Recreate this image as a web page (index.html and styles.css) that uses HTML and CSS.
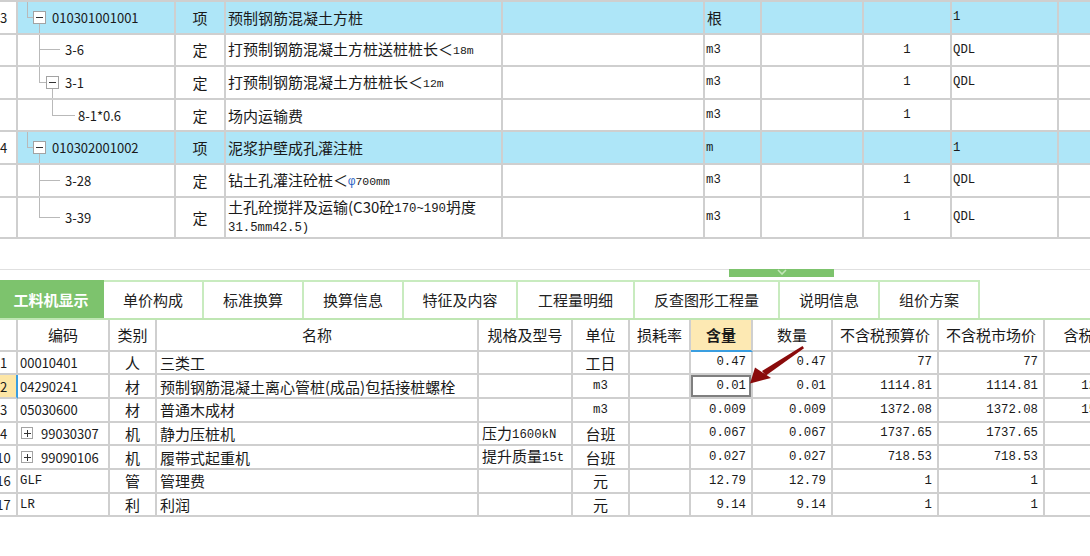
FILE: index.html
```html
<!DOCTYPE html>
<html lang="zh-CN">
<head>
<meta charset="utf-8">
<title>工料机显示</title>
<link rel="stylesheet" href="styles.css">
</head>
<body>
<div class="page">
  <div class="top">
    <div class="trow hl">
      <div class="c num"><span>3</span></div>
      <div class="c code root"><span class="elbow w6"><i></i><i></i></span><span class="bw down"><i class="up"></i><span class="box minus"></span><i class="dn"></i></span><span class="ctext">010301001001</span></div>
      <div class="c ctr">项</div>
      <div class="c l2">预制钢筋混凝土方桩</div>
      <div class="c"></div>
      <div class="c l2">根</div>
      <div class="c"></div>
      <div class="c"></div>
      <div class="c l1"><span class="m">1</span></div>
      <div class="c"></div>
    </div>
    <div class="trow">
      <div class="c num"></div>
      <div class="c code lv1"><span class="elbow w21 cont"><i></i><i></i></span><span class="ctext g5">3-6</span></div>
      <div class="c ctr">定</div>
      <div class="c l2"><span class="t">打预制钢筋混凝土方桩送桩桩长＜<span class="m sm">18m</span></span></div>
      <div class="c"></div>
      <div class="c l1"><span class="m">m3</span></div>
      <div class="c"></div>
      <div class="c ctr"><span class="m">1</span></div>
      <div class="c l1"><span class="m">QDL</span></div>
      <div class="c"></div>
    </div>
    <div class="trow">
      <div class="c num"></div>
      <div class="c code lv1"><span class="elbow w7"><i></i><i></i></span><span class="bw down"><i class="up"></i><span class="box minus"></span><i class="dn"></i></span><span class="ctext">3-1</span></div>
      <div class="c ctr">定</div>
      <div class="c l2"><span class="t">打预制钢筋混凝土方桩桩长＜<span class="m sm">12m</span></span></div>
      <div class="c"></div>
      <div class="c l1"><span class="m">m3</span></div>
      <div class="c"></div>
      <div class="c ctr"><span class="m">1</span></div>
      <div class="c l1"><span class="m">QDL</span></div>
      <div class="c"></div>
    </div>
    <div class="trow">
      <div class="c num"></div>
      <div class="c code lv2"><span class="elbow w23"><i></i><i></i></span><span class="ctext g3">8-1*0.6</span></div>
      <div class="c ctr">定</div>
      <div class="c l2">场内运输费</div>
      <div class="c"></div>
      <div class="c l1"><span class="m">m3</span></div>
      <div class="c"></div>
      <div class="c ctr"><span class="m">1</span></div>
      <div class="c l1"></div>
      <div class="c"></div>
    </div>
    <div class="trow hl">
      <div class="c num"><span>4</span></div>
      <div class="c code root"><span class="elbow w6"><i></i><i></i></span><span class="bw down"><i class="up"></i><span class="box minus"></span><i class="dn"></i></span><span class="ctext">010302001002</span></div>
      <div class="c ctr">项</div>
      <div class="c l2">泥浆护壁成孔灌注桩</div>
      <div class="c"></div>
      <div class="c l1"><span class="m">m</span></div>
      <div class="c"></div>
      <div class="c"></div>
      <div class="c l1"><span class="m">1</span></div>
      <div class="c"></div>
    </div>
    <div class="trow">
      <div class="c num"></div>
      <div class="c code lv1"><span class="elbow w21 cont"><i></i><i></i></span><span class="ctext g5">3-28</span></div>
      <div class="c ctr">定</div>
      <div class="c l2"><span class="t">钻土孔灌注砼桩＜<span class="m phi">φ</span><span class="m sm">700mm</span></span></div>
      <div class="c"></div>
      <div class="c l1"><span class="m">m3</span></div>
      <div class="c"></div>
      <div class="c ctr"><span class="m">1</span></div>
      <div class="c l1"><span class="m">QDL</span></div>
      <div class="c"></div>
    </div>
    <div class="trow tall">
      <div class="c num"></div>
      <div class="c code lv1"><span class="elbow w21"><i></i><i></i></span><span class="ctext g5">3-39</span></div>
      <div class="c ctr">定</div>
      <div class="c l2 two"><div class="t">土孔砼搅拌及运输(C30砼<span class="m">170~190</span>坍度<br><span class="m">31.5mm42.5)</span></div></div>
      <div class="c"></div>
      <div class="c l1"><span class="m">m3</span></div>
      <div class="c"></div>
      <div class="c ctr"><span class="m">1</span></div>
      <div class="c l1"><span class="m">QDL</span></div>
      <div class="c"></div>
    </div>
  </div>

  <div class="split">
    <div class="splitline">
      <div class="handle"><svg width="10" height="6" viewBox="0 0 10 6"><polyline points="1,1 5,5 9,1" fill="none" stroke="#c4e6b9" stroke-width="1.6"/></svg></div>
    </div>
  </div>

  <div class="tabs">
    <div class="tab active t104">工料机显示</div>
    <div class="tab t100">单价构成</div>
    <div class="tab t100">标准换算</div>
    <div class="tab t100">换算信息</div>
    <div class="tab t114">特征及内容</div>
    <div class="tab t117">工程量明细</div>
    <div class="tab t145">反查图形工程量</div>
    <div class="tab t100">说明信息</div>
    <div class="tab t100">组价方案</div>
  </div>

  <div class="bottom">
    <div class="brow bhead">
      <div class="c"></div>
      <div class="c ctr">编码</div>
      <div class="c ctr">类别</div>
      <div class="c ctr">名称</div>
      <div class="c ctr">规格及型号</div>
      <div class="c ctr">单位</div>
      <div class="c ctr">损耗率</div>
      <div class="c ctr sel-col">含量</div>
      <div class="c ctr">数量</div>
      <div class="c ctr">不含税预算价</div>
      <div class="c ctr">不含税市场价</div>
      <div class="c ctr">含税市场价</div>
    </div>
    <div class="brow">
      <div class="c num"><span>1</span></div>
      <div class="c code2">00010401</div>
      <div class="c ctr">人</div>
      <div class="c l3">三类工</div>
      <div class="c"></div>
      <div class="c ctr">工日</div>
      <div class="c"></div>
      <div class="c r"><span class="m">0.47</span></div>
      <div class="c r"><span class="m">0.47</span></div>
      <div class="c r"><span class="m">77</span></div>
      <div class="c r"><span class="m">77</span></div>
      <div class="c r last"><span class="m">77</span></div>
    </div>
    <div class="brow">
      <div class="c num cur"><span>2</span></div>
      <div class="c code2">04290241</div>
      <div class="c ctr">材</div>
      <div class="c l3">预制钢筋混凝土离心管桩(成品)包括接桩螺栓</div>
      <div class="c"></div>
      <div class="c ctr"><span class="m">m3</span></div>
      <div class="c"></div>
      <div class="c r selected"><span class="m">0.01</span></div>
      <div class="c r"><span class="m">0.01</span></div>
      <div class="c r"><span class="m">1114.81</span></div>
      <div class="c r"><span class="m">1114.81</span></div>
      <div class="c r last"><span class="m">1259.74</span></div>
    </div>
    <div class="brow">
      <div class="c num"><span>3</span></div>
      <div class="c code2">05030600</div>
      <div class="c ctr">材</div>
      <div class="c l3">普通木成材</div>
      <div class="c"></div>
      <div class="c ctr"><span class="m">m3</span></div>
      <div class="c"></div>
      <div class="c r"><span class="m">0.009</span></div>
      <div class="c r"><span class="m">0.009</span></div>
      <div class="c r"><span class="m">1372.08</span></div>
      <div class="c r"><span class="m">1372.08</span></div>
      <div class="c r last"><span class="m">1550.45</span></div>
    </div>
    <div class="brow">
      <div class="c num"><span>4</span></div>
      <div class="c code2"><span class="box plus"></span>99030307</div>
      <div class="c ctr">机</div>
      <div class="c l3">静力压桩机</div>
      <div class="c l3"><span class="t">压力<span class="m">1600kN</span></span></div>
      <div class="c ctr">台班</div>
      <div class="c"></div>
      <div class="c r"><span class="m">0.067</span></div>
      <div class="c r"><span class="m">0.067</span></div>
      <div class="c r"><span class="m">1737.65</span></div>
      <div class="c r"><span class="m">1737.65</span></div>
      <div class="c r last"></div>
    </div>
    <div class="brow">
      <div class="c num"><span>10</span></div>
      <div class="c code2"><span class="box plus"></span>99090106</div>
      <div class="c ctr">机</div>
      <div class="c l3">履带式起重机</div>
      <div class="c l3"><span class="t">提升质量<span class="m">15t</span></span></div>
      <div class="c ctr">台班</div>
      <div class="c"></div>
      <div class="c r"><span class="m">0.027</span></div>
      <div class="c r"><span class="m">0.027</span></div>
      <div class="c r"><span class="m">718.53</span></div>
      <div class="c r"><span class="m">718.53</span></div>
      <div class="c r last"></div>
    </div>
    <div class="brow">
      <div class="c num"><span>16</span></div>
      <div class="c code2"><span class="m">GLF</span></div>
      <div class="c ctr">管</div>
      <div class="c l3">管理费</div>
      <div class="c"></div>
      <div class="c ctr">元</div>
      <div class="c"></div>
      <div class="c r"><span class="m">12.79</span></div>
      <div class="c r"><span class="m">12.79</span></div>
      <div class="c r"><span class="m">1</span></div>
      <div class="c r"><span class="m">1</span></div>
      <div class="c r last"><span class="m">1</span></div>
    </div>
    <div class="brow">
      <div class="c num"><span>17</span></div>
      <div class="c code2"><span class="m">LR</span></div>
      <div class="c ctr">利</div>
      <div class="c l3">利润</div>
      <div class="c"></div>
      <div class="c ctr">元</div>
      <div class="c"></div>
      <div class="c r"><span class="m">9.14</span></div>
      <div class="c r"><span class="m">9.14</span></div>
      <div class="c r"><span class="m">1</span></div>
      <div class="c r"><span class="m">1</span></div>
      <div class="c r last"><span class="m">1</span></div>
    </div>
  </div>

  <svg class="arrow" width="70" height="50" viewBox="0 0 70 50">
    <polygon points="62.5,6 64,8.2 26,35.5 22,31" fill="#8a0b0b"/>
    <polygon points="10,43.5 15,27.5 31,38" fill="#8a0b0b"/>
  </svg>
</div>
</body>
</html>
```

FILE: styles.css
```css
* { box-sizing: border-box; }
html, body { margin: 0; padding: 0; }
body {
  width: 1090px;
  height: 556px;
  overflow: hidden;
  background: #ffffff;
  font-family: "Noto Sans CJK SC", "Microsoft YaHei", sans-serif;
  font-size: 15px;
  color: #1a1a1a;
}
.page { position: relative; width: 1090px; height: 556px; overflow: hidden; }

.m {
  font-family: "Liberation Mono", "Noto Sans CJK SC", monospace;
  font-size: 12.3px;
}
.m.sm { font-size: 11.5px; }
.phi { color: #2a62c4; }
.t { line-height: 18px; }
.t .m { vertical-align: 1.5px; }

/* ---------- top table ---------- */
.top { border-top: 2px solid #cfcfcf; width: 1117px; }
.trow {
  display: grid;
  grid-template-columns: 18px 158px 50px 277px 202px 57px 102px 88px 107px 60px;
  height: 32.6px;
}
.trow.tall { height: 41.5px; }
.c {
  border-right: 2px solid #cfcfcf;
  border-bottom: 2px solid #cfcfcf;
  display: flex;
  align-items: center;
  overflow: hidden;
  white-space: nowrap;
  min-width: 0;
}
.trow.hl .c:not(.num) { background: #aee6f8; }
.num { justify-content: flex-start; }
.num span {
  flex: none;
  width: 30px;
  margin-left: -11.5px;
  text-align: center;
  font-size: 13px;
}
.ctr { justify-content: center; }
.l1 { padding-left: 1px; }
.l2 { padding-left: 2px; }
.l3 { padding-left: 3px; }
.r { justify-content: flex-end; padding-right: 5px; }
.r.last { padding-right: 24px; }
.c.two { overflow: visible; }
.two .t { line-height: 17px; white-space: nowrap; }

.code { align-items: stretch; font-size: 13px; }
.code.root { padding-left: 9px; }
.code.lv1 { padding-left: 21px; }
.code.lv2 { padding-left: 34px; }
.ctext { align-self: center; margin-left: 6px; }
.ctext.g5 { margin-left: 5px; }
.ctext.g3 { margin-left: 3px; }

.elbow { flex: none; display: flex; flex-direction: column; }
.elbow i { flex: 1; display: block; }
.elbow i:first-child { border-left: 1px solid #b9b9b9; border-bottom: 1px solid #b9b9b9; }
.elbow.cont i:last-child { border-left: 1px solid #b9b9b9; }
.w6 { width: 6px; }
.w7 { width: 7px; }
.w21 { width: 21px; }
.w23 { width: 23px; }

.bw { flex: none; width: 13px; display: flex; flex-direction: column; align-items: center; }
.bw .up { flex: 1; display: block; }
.bw .dn { flex: 1; display: block; width: 1px; }
.bw.down .dn { background: #b9b9b9; }

.box {
  flex: none;
  width: 13px;
  height: 13px;
  border: 1px solid #a3a3a3;
  background: #ffffff;
  display: flex;
  align-items: center;
  justify-content: center;
}
.box.minus::before {
  content: "";
  width: 7px;
  height: 1px;
  background: #333;
}
.box.plus {
  width: 12px;
  height: 12px;
  margin: 0 8px 0 1px;
  position: relative;
}
.box.plus::before {
  content: "";
  width: 7px;
  height: 1px;
  background: #333;
}
.box.plus::after {
  content: "";
  position: absolute;
  width: 1px;
  height: 7px;
  background: #333;
  left: 4.5px;
  top: 1.5px;
}

/* ---------- splitter ---------- */
.split { height: 40.5px; padding-top: 29.5px; }
.splitline { border-top: 1px solid #e0e0e0; height: 1px; }
.handle {
  margin-left: 729px;
  margin-top: -1px;
  width: 105px;
  height: 8px;
  background: #7dc36d;
  display: flex;
  justify-content: center;
  align-items: flex-start;
}
.handle svg { display: block; }

/* ---------- tabs ---------- */
.tabs {
  display: flex;
  height: 40px;
  border-bottom: 2px solid #bfe6b3;
}
.tab {
  height: 38px;
  border-top: 2px solid #c8ebbf;
  border-right: 2px solid #c8ebbf;
  display: flex;
  align-items: center;
  justify-content: center;
  font-size: 15px;
  color: #222;
  flex: none;
}
.tab.active {
  background: #7dc36d;
  border-color: #7dc36d;
  color: #ffffff;
  font-weight: bold;
}
.t100 { width: 100px; }
.t104 { width: 104px; }
.t114 { width: 114px; }
.t117 { width: 117px; }
.t145 { width: 145px; }

/* ---------- bottom table ---------- */
.bottom { width: 1160px; }
.brow {
  display: grid;
  grid-template-columns: 18px 92px 47px 322px 94px 57px 61px 62px 80px 106px 106px 114px;
  height: 23.7px;
}
.brow.bhead { height: 32px; }
.sel-col {
  background: #fde9b3;
  font-weight: bold;
  border-bottom-color: #3a9ee0;
}
.code2 { padding-left: 2px; font-size: 13px; }
.num.cur { background: #fde6a6; border-right-color: #3a9ee0; }
.selected { box-shadow: inset 0 0 0 2px #7f7f7f; }

/* ---------- annotation arrow ---------- */
.arrow { position: absolute; left: 740px; top: 340px; }
```
